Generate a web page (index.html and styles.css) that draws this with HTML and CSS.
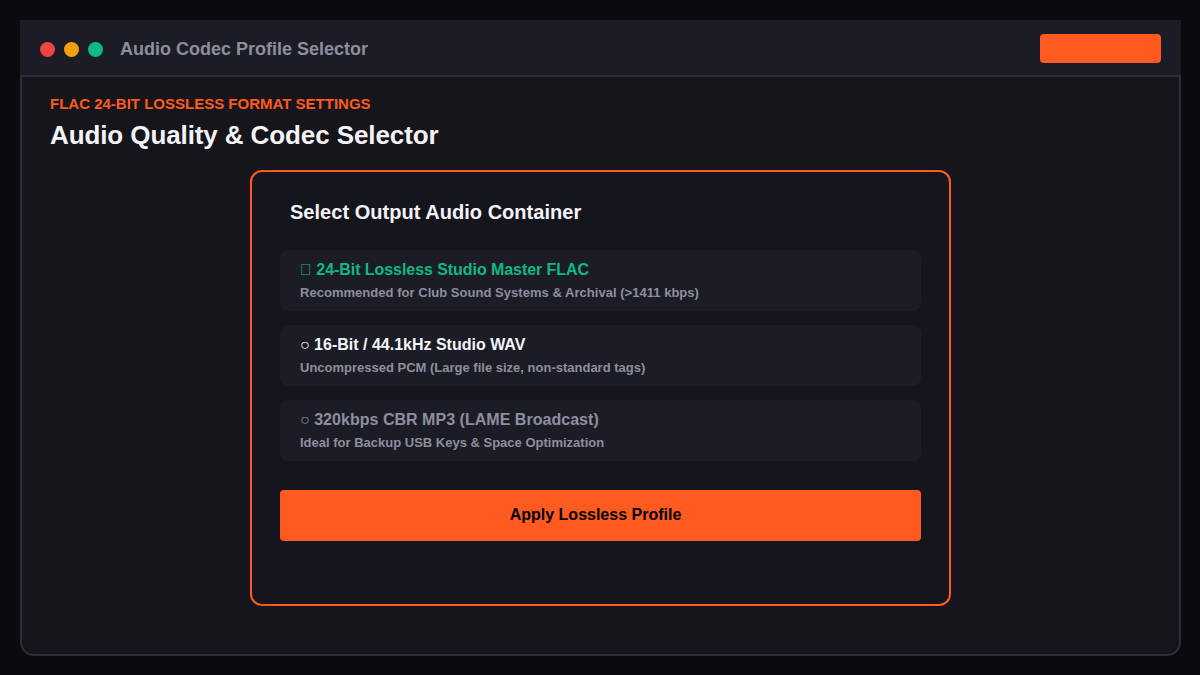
FILE: index.html
```html
<!DOCTYPE html>
<html>
<head>
  <title>Audio Codec Profile Selector</title>
  <link rel="stylesheet" href="styles.css">
</head>
<body>
  <div class="window">
    <div class="titlebar">
      <div class="dots">
        <span class="dot dot-red"></span>
        <span class="dot dot-amber"></span>
        <span class="dot dot-green"></span>
      </div>
      <div class="app-title">Audio Codec Profile Selector</div>
      <div class="pill"></div>
    </div>
    <div class="content">
      <div class="eyebrow">FLAC 24-BIT LOSSLESS FORMAT SETTINGS</div>
      <h1>Audio Quality &amp; Codec Selector</h1>
      <div class="panel">
        <h2>Select Output Audio Container</h2>
        <div class="option">
          <div class="option-name selected">&#xE000; 24-Bit Lossless Studio Master FLAC</div>
          <div class="option-desc wide">Recommended for Club Sound Systems &amp; Archival (&gt;1411 kbps)</div>
        </div>
        <div class="option">
          <div class="option-name">○ 16-Bit / 44.1kHz Studio WAV</div>
          <div class="option-desc">Uncompressed PCM (Large file size, non-standard tags)</div>
        </div>
        <div class="option">
          <div class="option-name muted">○ 320kbps CBR MP3 (LAME Broadcast)</div>
          <div class="option-desc">Ideal for Backup USB Keys &amp; Space Optimization</div>
        </div>
        <button class="apply">Apply Lossless Profile</button>
      </div>
    </div>
  </div>
</body>
</html>
```
FILE: styles.css
```css
* {
  box-sizing: border-box;
}

body {
  margin: 0;
  padding: 20px;
  height: 675px;
  overflow: hidden;
  background: #0a0a0f;
  color: #f4f4f8;
  font-family: "Liberation Sans", Arial, sans-serif;
}

.window {
  width: 1161px;
  height: 636px;
  display: flex;
  flex-direction: column;
}

.titlebar {
  height: 57px;
  display: flex;
  align-items: center;
  padding: 2px 20px 0;
  background: #1c1c26;
  border-bottom: 2px solid #2d2d3a;
}

.dots {
  display: flex;
  gap: 9px;
  margin: 2px 17px 0 0;
}

.dot {
  width: 15px;
  height: 15px;
  border-radius: 50%;
}

.dot-red {
  background: #ef4444;
}

.dot-amber {
  background: #f59e0b;
}

.dot-green {
  background: #10b981;
}

.app-title {
  margin-top: 2px;
  font-size: 18px;
  font-weight: bold;
  color: #8e8e9f;
}

.pill {
  width: 121px;
  height: 29px;
  margin-left: auto;
  background: #ff5a1f;
  border-radius: 4px;
}

.content {
  flex: 1;
  padding: 18px 28px 0;
  background: #15151b;
  border: 2px solid #2d2d3a;
  border-top: 0;
  border-radius: 0 0 14px 14px;
}

.eyebrow {
  font-size: 15px;
  line-height: 18px;
  font-weight: bold;
  color: #ff5a1f;
}

h1 {
  margin: 7px 0 20px;
  font-size: 26px;
  line-height: 30px;
  letter-spacing: -0.1px;
}

.panel {
  width: 701px;
  height: 436px;
  margin: 0 auto;
  padding: 28px 28px 0;
  background: #14151d;
  border: 2px solid #ff5a1f;
  border-radius: 12px;
}

h2 {
  margin: 0 0 26px 10px;
  font-size: 20px;
  line-height: 24px;
  letter-spacing: 0.03px;
}

.option {
  width: 641px;
  height: 61px;
  margin-bottom: 14px;
  padding: 10px 20px;
  background: #1c1c26;
  border-radius: 8px;
}

.option-name {
  font-size: 16px;
  line-height: 20px;
  font-weight: bold;
}

.selected {
  color: #10b981;
  letter-spacing: -0.06px;
}

.muted {
  color: #8e8e9f;
  letter-spacing: 0.03px;
}

.option-desc {
  margin-top: 4px;
  font-size: 13px;
  line-height: 17px;
  font-weight: bold;
  color: #8e8e9f;
}

.wide {
  letter-spacing: 0.03px;
}

.apply {
  display: block;
  width: 641px;
  height: 51px;
  margin-top: 29px;
  padding: 0 10px 2px 0;
  border: 0;
  border-radius: 4px;
  background: #ff5a1f;
  color: #000;
  font-family: inherit;
  font-size: 16px;
  font-weight: bold;
}
```
